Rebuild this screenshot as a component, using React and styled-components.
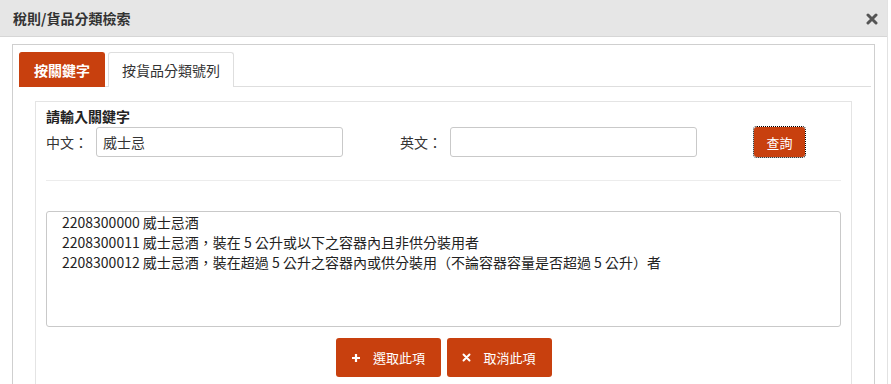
import React from "react";
import styled, { createGlobalStyle } from "styled-components";

const ORANGE = "#c8400e";

const GlobalStyle = createGlobalStyle`
  html, body {
    margin: 0;
    background: #fff;
  }
  body {
    font-family: "Noto Sans CJK TC", "Liberation Sans", sans-serif;
    font-size: 14px;
    color: #333;
  }
`;

const Dialog = styled.div`
  width: 888px;
  height: 384px;
  overflow: hidden;
  border-right: 1px solid #e2e2e2;
  box-sizing: border-box;
  display: flex;
  flex-direction: column;
`;

const Header = styled.div`
  height: 36px;
  flex: none;
  background: #e6e6e6;
  border-bottom: 1px solid #d6d6d6;
  display: flex;
  align-items: center;
  justify-content: space-between;
  padding: 0 9px 0 13px;
`;

const Title = styled.span`
  font-size: 14px;
  font-weight: 600;
  color: #333;
  line-height: 20px;
`;

const Close = styled.span`
  display: flex;
  width: 12px;
  height: 12px;
  margin-top: 1px;
`;

const Body = styled.div`
  flex: 1;
  padding: 7px 12px 0 12px;
  display: flex;
`;

const Panel = styled.div`
  flex: 1;
  border: 1px solid #cfcfcf;
  border-bottom: none;
  padding: 7px 3px 0 6px;
`;

const Tabs = styled.div`
  display: flex;
  gap: 3px;
  border-bottom: 1px solid #dedede;
`;

const Tab = styled.div`
  height: 35px;
  box-sizing: border-box;
  padding: 0 ${(p) => (p.$active ? 14 : 13)}px;
  display: flex;
  align-items: center;
  font-size: 14px;
  border: 1px solid ${(p) => (p.$active ? ORANGE : "#dedede")};
  border-bottom: none;
  border-radius: 3px 3px 0 0;
  background: ${(p) => (p.$active ? ORANGE : "#fff")};
  color: ${(p) => (p.$active ? "#fff" : "#333")};
  font-weight: ${(p) => (p.$active ? 700 : 400)};
  margin-bottom: -1px;
  padding-bottom: 1px;
`;

const Pane = styled.div`
  padding: 14px 19px 0 16px;
`;

const Fieldset = styled.div`
  border: 1px solid #e4e4e4;
  padding: 4px 10px 30px 10px;
`;

const Legend = styled.div`
  font-weight: 700;
  line-height: 20px;
  color: #222;
`;

const Row = styled.div`
  display: flex;
  align-items: center;
  margin-top: 1px;
`;

const Label = styled.label`
  width: 50px;
  flex: none;
  line-height: 20px;
  color: #333;
`;

const Input = styled.input`
  width: 247px;
  height: 30px;
  box-sizing: border-box;
  border: 1px solid #c9c9c9;
  border-radius: 3px;
  padding: 0 6px;
  font: inherit;
  color: #333;
  outline: none;
  margin-right: ${(p) => p.$gap || 0}px;
`;

const Button = styled.button`
  background: ${ORANGE};
  color: #fff;
  border: none;
  border-radius: 3px;
  font-family: inherit;
  font-size: 13px;
  cursor: pointer;
  display: flex;
  align-items: center;
  justify-content: center;
  gap: ${(p) => p.$gap || 0}px;
  width: ${(p) => p.$w}px;
  height: ${(p) => p.$h}px;
  padding: 0;
  outline: ${(p) => (p.$focus ? "1px dotted #000" : "none")};
  outline-offset: 0;
`;

const Divider = styled.div`
  height: 1px;
  background: #ececec;
  margin-top: 23px;
`;

const ResultBox = styled.div`
  margin-top: 30px;
  height: 116px;
  box-sizing: border-box;
  border: 1px solid #c9c9c9;
  border-radius: 3px;
  padding: 0 15px;
`;

const ResultItem = styled.div`
  line-height: 20px;
  color: #222;
  white-space: nowrap;
`;

const Actions = styled.div`
  display: flex;
  justify-content: center;
  gap: 6px;
  margin-top: 11px;
`;

const CloseIcon = ({ size = 12, color = "#555", stroke = 3 }) => (
  <svg width={size} height={size} viewBox="0 0 12 12">
    <path
      d="M2 2 L10 10 M10 2 L2 10"
      stroke={color}
      strokeWidth={stroke}
      strokeLinecap="round"
    />
  </svg>
);

const PlusIcon = () => (
  <svg width="10" height="10" viewBox="0 0 10 10">
    <path d="M5 1 V9 M1 5 H9" stroke="#fff" strokeWidth="2.2" />
  </svg>
);

const results = [
  "2208300000 威士忌酒",
  "2208300011 威士忌酒，裝在 5 公升或以下之容器內且非供分裝用者",
  "2208300012 威士忌酒，裝在超過 5 公升之容器內或供分裝用（不論容器容量是否超過 5 公升）者",
];

export default function App() {
  return (
    <>
      <GlobalStyle />
      <Dialog>
        <Header>
          <Title>稅則/貨品分類檢索</Title>
          <Close>
            <CloseIcon />
          </Close>
        </Header>
        <Body>
          <Panel>
            <Tabs>
              <Tab $active>按關鍵字</Tab>
              <Tab>按貨品分類號列</Tab>
            </Tabs>
            <Pane>
              <Fieldset>
                <Legend>請輸入關鍵字</Legend>
                <Row>
                  <Label>中文：</Label>
                  <Input defaultValue="威士忌" $gap={57} />
                  <Label>英文：</Label>
                  <Input $gap={57} />
                  <Button $w={51} $h={30} $focus>
                    查詢
                  </Button>
                </Row>
                <Divider />
                <ResultBox>
                  {results.map((r) => (
                    <ResultItem key={r}>{r}</ResultItem>
                  ))}
                </ResultBox>
                <Actions>
                  <Button $w={105} $h={39} $gap={12}>
                    <PlusIcon />
                    選取此項
                  </Button>
                  <Button $w={105} $h={39} $gap={12}>
                    <CloseIcon size={9} color="#fff" stroke={2.6} />
                    取消此項
                  </Button>
                </Actions>
              </Fieldset>
            </Pane>
          </Panel>
        </Body>
      </Dialog>
    </>
  );
}
